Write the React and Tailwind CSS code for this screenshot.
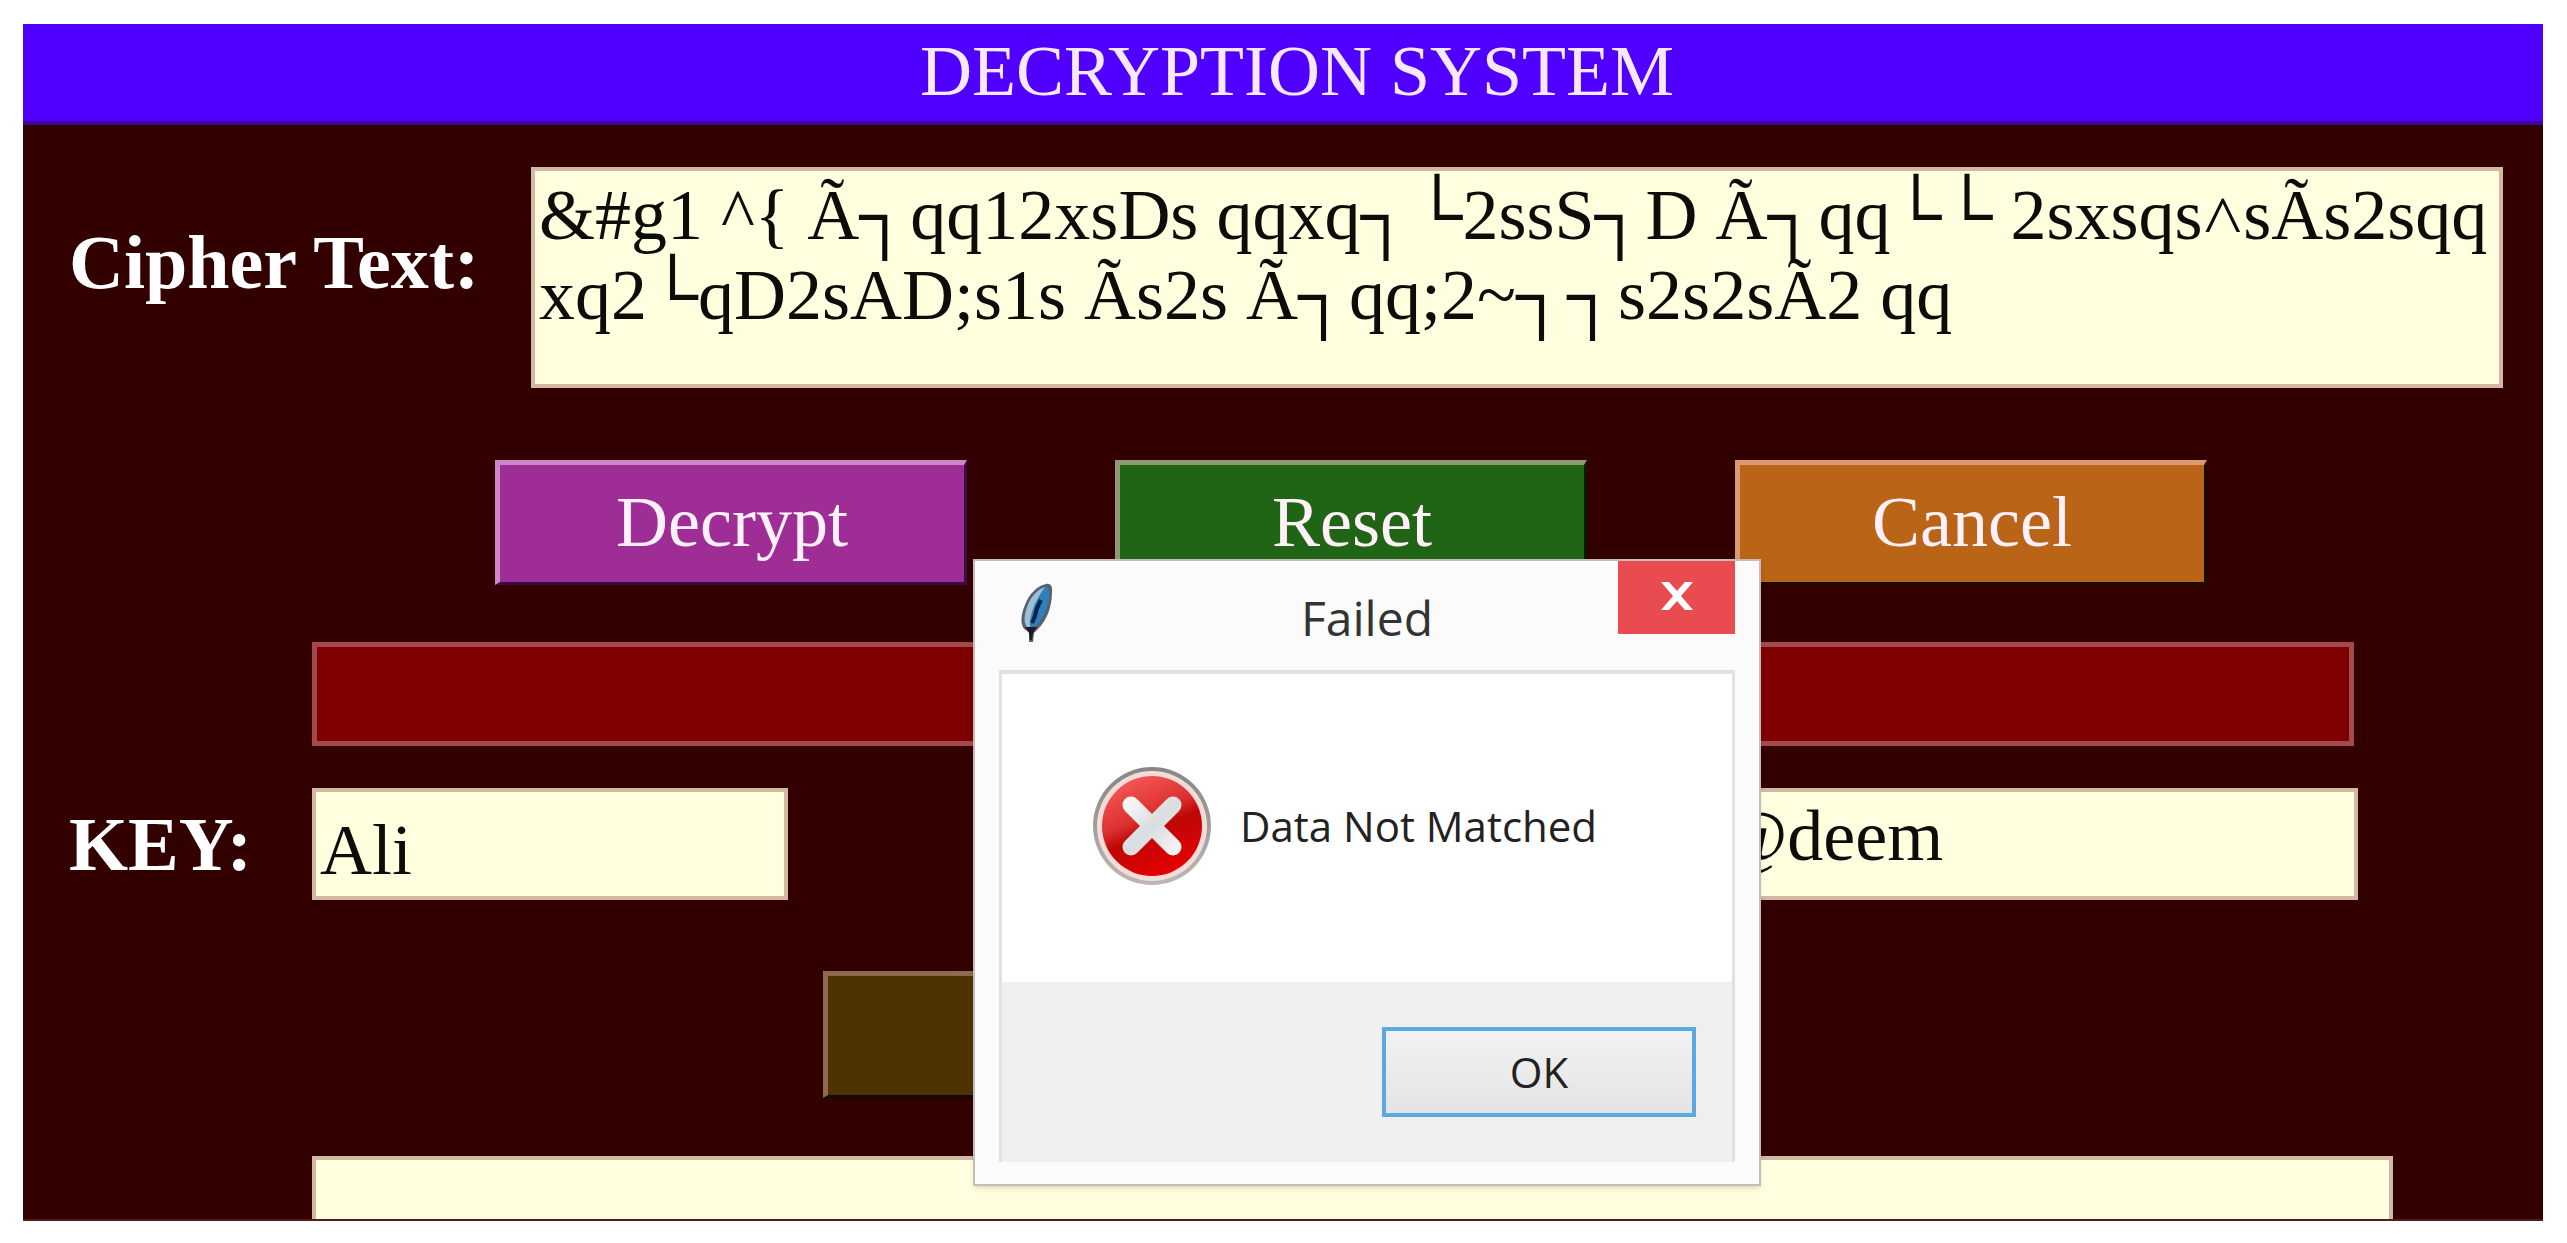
import React from 'react';

const CIPHER_TEXT = [
  '&#g1 ^{ Ã┐qq12xsDs qqxq┐└2ssS┐D Ã┐qq└└ 2sxsqs˄sÃs2sqq',
  'xq2└qD2sAD;s1s Ãs2s Ã┐qq;2~┐┐s2s2sÃ2 qq'
].join('\n');

const actions = [
  { label: 'Decrypt', color: 'bg-[#9f2d96] border-t-[#cf86c6] border-l-[#cf86c6] border-b-[#3d0a46] border-r-[#3d0a46]' },
  { label: 'Reset', color: 'bg-[#206416] border-t-[#8f9a74] border-l-[#8f9a74] border-b-[#0b1a04] border-r-[#0b1a04]' },
  { label: 'Cancel', color: 'bg-[#b96416] border-t-[#dd9a70] border-l-[#dd9a70] border-b-[#1c0a00] border-r-[#1c0a00]' }
];

const fieldClass =
  'block resize-none overflow-hidden rounded-none border-4 border-[#d3b8a2] bg-[#ffffe0] px-1 text-[72px] text-[#0c0c08] outline-none';

const FeatherIcon = () => (
  <svg className="h-[62px] w-9" viewBox="0 0 36 62" aria-hidden="true">
    <path d="M27 1 C31 0 34 3 33 9 C33 24 28 37 19 46 L15 50 L14 59 L10 59 L10 49 L5 46 C1 40 2 31 6 22 C10 11 18 3 27 1 Z" fill="#56636e" />
    <path d="M27 4 C31 5 31 12 29 20 C26 32 20 41 13 45 L9 45 C4 39 6 29 10 21 C14 12 20 5 27 4 Z" fill="#2f7fbd" />
    <path d="M26 4 C17 7 10 16 7 27 C5 35 5 40 8 44 L11 44 C10 34 15 19 26 4 Z" fill="#9fbfd6" />
    <path d="M22 17 L18 25 L16 33 L13 40" fill="none" stroke="#06244a" strokeWidth="4" />
    <path d="M6 44 L18 44 L14 50 L13 57 L11 57 L10 50 Z" fill="#1d1a22" />
  </svg>
);

const ErrorIcon = () => (
  <svg className="size-[120px]" viewBox="0 0 120 120" aria-hidden="true">
    <defs>
      <linearGradient id="ring" x1="0" y1="0" x2="0" y2="1">
        <stop offset="0" stopColor="#858787" />
        <stop offset="1" stopColor="#bdb7b5" />
      </linearGradient>
      <linearGradient id="ball" x1="0.25" y1="0" x2="0.7" y2="1">
        <stop offset="0" stopColor="#f65a5a" />
        <stop offset="0.4" stopColor="#dc3030" />
        <stop offset="0.55" stopColor="#be0606" />
        <stop offset="1" stopColor="#e80000" />
      </linearGradient>
      <linearGradient id="cross" gradientUnits="userSpaceOnUse" x1="30" y1="30" x2="90" y2="90">
        <stop offset="0" stopColor="#ffffff" />
        <stop offset="0.5" stopColor="#d9dcde" />
        <stop offset="1" stopColor="#fafafa" />
      </linearGradient>
    </defs>
    <circle cx="60" cy="60" r="59" fill="url(#ring)" />
    <circle cx="60" cy="60" r="55" fill="#f6dcd8" />
    <circle cx="60" cy="60" r="50" fill="url(#ball)" />
    <path d="M39 39 L81 81 M81 39 L39 81" fill="none" stroke="url(#cross)" strokeWidth="17" strokeLinecap="round" />
  </svg>
);

const FailedDialog = () => (
  <div
    role="dialog"
    aria-labelledby="dialog-title"
    className="absolute top-[535px] left-[950px] flex w-[788px] flex-col border-2 border-[#c9bcb8] bg-[#fbfbfb] px-6 pb-[22px] font-['Open_Sans',sans-serif] text-[#222] shadow-md"
  >
    <div className="relative flex h-[109px] items-center justify-center pt-1">
      <div className="absolute top-[22px] left-5">
        <FeatherIcon />
      </div>
      <h2 id="dialog-title" className="text-[48px] leading-none text-[#333]">Failed</h2>
      <button aria-label="Close" className="absolute top-0 right-0 flex h-[73px] w-[117px] items-center justify-center bg-[#e84c50] pb-1">
        <svg className="h-7 w-8" viewBox="0 0 32 28" aria-hidden="true">
          <path d="M0 0 H8 L16 9 L24 0 H32 L20 14 L32 28 H24 L16 19 L8 28 H0 L12 14 Z" fill="#fff" />
        </svg>
      </button>
    </div>
    <div className="border-x-3 border-t-4 border-[#dfe2e2] bg-white">
      <div className="flex h-[308px] items-center gap-7 pb-1 pl-[90px]">
        <ErrorIcon />
        <p className="text-[42px] leading-none">Data Not Matched</p>
      </div>
      <div className="flex h-[180px] items-center justify-end bg-[#efefef] pr-9">
        <button className="h-[90px] w-[314px] border-4 border-[#5aaae2] bg-linear-to-b from-[#f2f2f2] to-[#e4e4e4] text-[42px] leading-none">
          OK
        </button>
      </div>
    </div>
  </div>
);

export default function App() {
  return (
    <div className="bg-white pt-6 pr-6 pb-[22px] pl-[23px] font-['Liberation_Serif',serif]">
      <main className="relative h-[1197px] overflow-hidden border-b-2 border-[#571a1a] bg-[#330000]">
        <h1 className="flex h-[101px] items-center justify-center border-b-4 border-[#40069a] bg-[#5000ff] pb-1 pl-7 text-[72px] leading-none text-[#f7e8ff]">
          DECRYPTION SYSTEM
        </h1>

        <div className="mt-[42px] flex items-center pr-10 pl-[46px]">
          <label htmlFor="cipher" className="w-[462px] pb-8 text-[76px] leading-none font-bold text-white">
            Cipher Text:
          </label>
          <textarea
            id="cipher"
            className={`${fieldClass} h-[221px] flex-1 pt-1 leading-[80px] whitespace-pre`}
            defaultValue={CIPHER_TEXT}
          />
        </div>

        <div className="mt-[72px] flex gap-[148px] pl-[472px]">
          {actions.map((action) => (
            <button
              key={action.label}
              className={`h-[125px] w-[472px] border-t-5 border-r-3 border-b-3 border-l-5 pb-1 text-[72px] leading-none text-[#fff0fa] ${action.color}`}
            >
              {action.label}
            </button>
          ))}
        </div>

        {/* Status bar */}
        <div className="mt-[57px] mr-[189px] ml-[289px] h-[104px] border-5 border-[#a44a4c] bg-[#7e0000]" />

        <div className="mt-[42px] flex items-center pr-[185px] pl-[46px]">
          <label htmlFor="key" className="w-[243px] text-[76px] leading-none font-bold text-white">
            KEY:
          </label>
          <input id="key" className={`${fieldClass} h-[112px] w-[476px] pt-3`} defaultValue="Ali" />
          <textarea
            aria-label="Password"
            className={`${fieldClass} ml-auto h-[112px] w-[645px] pt-1 leading-[80px]`}
            defaultValue="@deem"
          />
        </div>

        <button
          aria-label="Match"
          className="mt-[71px] ml-[800px] block h-[127px] w-[472px] border-t-5 border-r-3 border-b-3 border-l-5 border-t-[#8d6a50] border-r-[#140a00] border-b-[#140a00] border-l-[#8d6a50] bg-[#4c3300]"
        />

        <div className="mt-[58px] mr-[150px] ml-[289px]">
          <textarea aria-label="Plain text" className={`${fieldClass} h-[180px] w-full`} />
        </div>

        <FailedDialog />
      </main>
    </div>
  );
}
